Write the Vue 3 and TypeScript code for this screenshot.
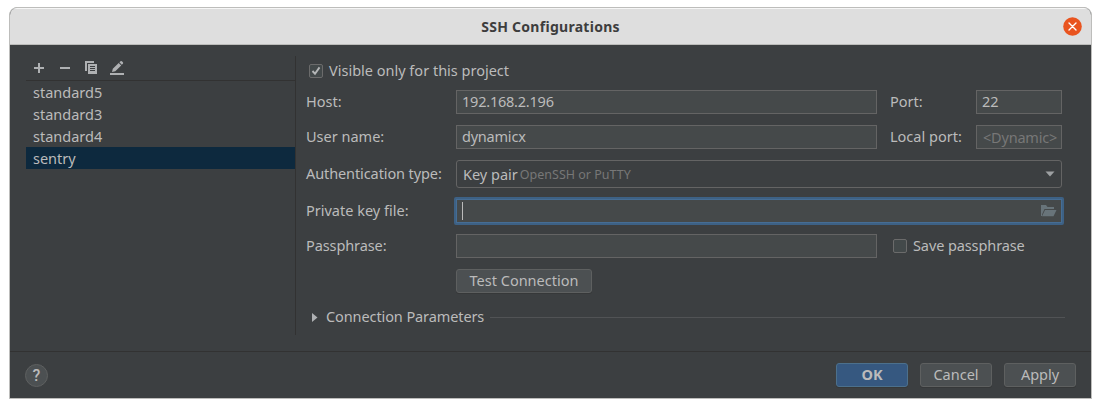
<script setup lang="ts">
import { ref } from 'vue'

const hosts = ['standard5', 'standard3', 'standard4', 'sentry']
const selected = ref('sentry')
const projectOnly = ref(true)
const savePassphrase = ref(false)
</script>

<template>
  <div class="window">
    <header class="titlebar">
      <span class="title">SSH Configurations</span>
      <button class="close" aria-label="Close">
        <svg width="19" height="19" viewBox="0 0 19 19">
          <circle cx="9.5" cy="9.5" r="9.3" fill="#e9541f" />
          <path d="M6 6l7 7M13 6l-7 7" stroke="#fff" stroke-width="1.4" stroke-linecap="round" />
        </svg>
      </button>
    </header>

    <main class="body">
      <aside class="sidebar">
        <div class="toolbar">
          <svg width="16" height="16" viewBox="0 0 16 16"><path d="M7 3h2v4h4v2H9v4H7V9H3V7h4z" fill="#afb1b3" /></svg>
          <svg width="16" height="16" viewBox="0 0 16 16"><path d="M3 7h10v2H3z" fill="#afb1b3" /></svg>
          <svg width="16" height="16" viewBox="0 0 16 16">
            <path d="M2 1h9v2H4v8H2z" fill="#afb1b3" />
            <path fill-rule="evenodd" d="M5 4h9v10H5zM7 6v1h5V6zM7 8v1h5V8zM7 10v1h5v-1z" fill="#afb1b3" />
          </svg>
          <svg width="16" height="16" viewBox="0 0 16 16">
            <path d="M1 13h14v2H1zM3 12l.8-3.300L9.700 3l2.500 2.500-5.900 5.700zM10.400 2.300l1.100-1.100q.7-.5 1.400.1l1 1q.6.7 0 1.400l-1.100 1.100z" fill="#afb1b3" />
          </svg>
        </div>
        <ul class="list">
          <li v-for="h in hosts" :key="h" :class="{ active: h === selected }" @click="selected = h">{{ h }}</li>
        </ul>
      </aside>

      <section class="form">
        <label class="check visible" @click="projectOnly = !projectOnly">
          <span class="box">
            <svg v-if="projectOnly" width="12" height="12" viewBox="0 0 12 12"><path d="M2.500 6l2.500 2.800L9.500 2.400" fill="none" stroke="#b4b6b7" stroke-width="1.9" /></svg>
          </span>
          <span class="text">Visible only for this project</span>
        </label>

        <div class="row host">
          <span class="name">Host:</span>
          <div class="field narrow">192.168.2.196</div>
          <span class="side">Port:</span>
          <div class="field small">22</div>
        </div>
        <div class="row user">
          <span class="name">User name:</span>
          <div class="field narrow">dynamicx</div>
          <span class="side">Local port:</span>
          <div class="field small hint">&lt;Dynamic&gt;</div>
        </div>
        <div class="row auth">
          <span class="name snug">Authentication type:</span>
          <div class="combo">
            <span>Key pair</span>
            <span class="sub">OpenSSH or PuTTY</span>
            <svg class="arrow" width="10" height="6" viewBox="0 0 10 6"><path d="M.5.5h9L5 5.500z" fill="#9da0a2" /></svg>
          </div>
        </div>
        <div class="row key">
          <span class="name">Private key file:</span>
          <div class="focus">
            <i class="caret"></i>
            <svg class="folder" width="16" height="12" viewBox="0 0 16 12"><path d="M0 0h5l1.500 2H13v2H3.500L1 9.500V11H0zM4 5h11.500L12.500 11.300H1z" fill="#68747a" /></svg>
          </div>
        </div>
        <div class="row pass">
          <span class="name snug">Passphrase:</span>
          <div class="field"></div>
          <label class="check save" @click="savePassphrase = !savePassphrase">
            <span class="box">
              <svg v-if="savePassphrase" width="12" height="12" viewBox="0 0 12 12"><path d="M2.500 6l2.500 2.800L9.500 2.400" fill="none" stroke="#b4b6b7" stroke-width="1.9" /></svg>
            </span>
            <span class="text snug">Save passphrase</span>
          </label>
        </div>
        <button class="btn test">Test Connection</button>
        <div class="section">
          <svg width="6" height="9" viewBox="0 0 6 9"><path d="M0 0l5.500 4.500L0 9z" fill="#afb1b3" /></svg>
          <span class="text snug">Connection Parameters</span>
          <i class="rule"></i>
        </div>
      </section>
    </main>

    <footer class="footer">
      <button class="help">?</button>
      <div class="actions">
        <button class="btn primary">OK</button>
        <button class="btn">Cancel</button>
        <button class="btn">Apply</button>
      </div>
    </footer>
  </div>
</template>

<style>
html,
body {
  background: #fff;
  overflow: hidden;
}
</style>

<style scoped>
* {
  box-sizing: border-box;
}
.window {
  width: 1083px;
  height: 392px;
  margin: 7px 0 0 9px;
  border: 1px solid #bdbdbb;
  border-radius: 8px 8px 0 0;
  background: #3c3f41;
  overflow: hidden;
  display: flex;
  flex-direction: column;
  color: #bbb;
  font: 14.5px/20px "Noto Sans", sans-serif;
  white-space: nowrap;
}
button {
  font: inherit;
  color: inherit;
  padding: 0;
}
.titlebar {
  height: 37px;
  flex: none;
  background: #dedede;
  border-top: 1px solid #f6f6f6;
  border-bottom: 1px solid #bcbcba;
  display: grid;
  grid-template-columns: 1fr auto 1fr;
  align-items: center;
  color: #3d3d3d;
}
.title {
  grid-column: 2;
  font-weight: 700;
  font-size: 14px;
  letter-spacing: 0.28px;
}
.close {
  justify-self: end;
  margin: 0 9px 1px 0;
  width: 19px;
  height: 19px;
  border: 0;
  background: none;
}
svg {
  display: block;
  flex: none;
}
.body {
  flex: 1;
  display: flex;
  padding: 11px 0 0 16px;
}
.sidebar {
  width: 270px;
  height: 279px;
  border-right: 1px solid #323232;
}
.toolbar {
  height: 25px;
  border-bottom: 1px solid #323232;
  display: flex;
  gap: 10px;
  padding: 4px 0 0 5px;
}
.list {
  list-style: none;
  margin: 0;
  padding: 0;
}
.list li {
  height: 22px;
  line-height: 23px;
  padding-left: 7px;
}
.list li.active {
  background: #0d293e;
}
.form {
  width: 759px;
  margin-left: 10px;
  display: flex;
  flex-direction: column;
}
.check {
  display: flex;
  align-items: center;
  gap: 6px;
  height: 14px;
}
.visible {
  margin: 8px 0 0 3px;
}
.box {
  width: 14px;
  height: 14px;
  border: 1px solid #6b6b6b;
  border-radius: 2px;
  background: #43494a;
  display: grid;
  place-items: center;
}
.text {
  padding-bottom: 2px;
}
.snug {
  letter-spacing: -0.1px;
}
.row {
  display: flex;
  align-items: center;
  height: 24px;
}
.host {
  margin-top: 12px;
}
.user,
.test {
  margin-top: 11px;
}
.auth {
  margin-top: 11px;
  height: 28px;
}
.key {
  margin-top: 9px;
  height: 28px;
}
.pass {
  margin-top: 9px;
}
.name,
.side {
  flex: none;
  line-height: 20px;
  padding-bottom: 2px;
}
.name {
  width: 150px;
}
.side {
  width: 99px;
  padding-left: 13px;
}
.field {
  width: 421px;
  height: 24px;
  flex: none;
  border: 1px solid #646464;
  background: #45494a;
  padding-left: 5px;
  line-height: 20px;
}
.field.narrow {
  letter-spacing: -0.22px;
}
.field.small {
  width: 86px;
}
.field.small.hint {
  color: #777;
  padding-left: 6px;
  line-height: 22px;
  letter-spacing: -0.2px;
}
.combo {
  width: 606px;
  height: 28px;
  border: 1px solid #646464;
  border-radius: 3px;
  display: flex;
  align-items: center;
  padding: 0 6px;
}
.sub {
  color: #777;
  font-size: 12.5px;
  margin: 2px 0 0 2px;
}
.arrow {
  margin-left: auto;
}
.focus {
  width: 610px;
  height: 28px;
  margin-left: -2px;
  border: 2px solid #3d6185;
  border-radius: 2px;
  background: #45494a;
  box-shadow: inset 0 0 0 1px #466d94;
  display: flex;
  align-items: center;
  padding: 0 5px 0 6px;
}
.caret {
  width: 1px;
  height: 18px;
  background: #bbb;
}
.folder {
  margin-left: auto;
}
.save {
  margin-left: 16px;
}
.btn {
  width: 72px;
  height: 24px;
  flex: none;
  border: 1px solid #5e6060;
  border-radius: 3px;
  background: #4c5052;
  box-shadow: 0 1px 0 #363839;
  line-height: 20px;
  padding-bottom: 2px;
}
.test {
  width: 136px;
  margin-left: 150px;
}
.section {
  margin: 14px 0 0 6px;
  height: 20px;
  display: flex;
  align-items: center;
}
.section .text {
  margin-left: 8px;
}
.rule {
  flex: 1;
  height: 1px;
  margin-left: 6px;
  background: #515355;
}
.footer {
  height: 47px;
  flex: none;
  border-top: 1px solid #323232;
  display: flex;
  justify-content: space-between;
  padding: 11px 15px 0;
}
.help {
  width: 23px;
  height: 23px;
  margin-top: 1px;
  border: 1px solid #5e6060;
  border-radius: 50%;
  background: #4c5052;
  font: 500 16px/20px Roboto, sans-serif;
}
.actions {
  display: flex;
  gap: 12px;
}
.primary {
  background: #365880;
  border-color: #4c708c;
  font-weight: 700;
}
</style>
